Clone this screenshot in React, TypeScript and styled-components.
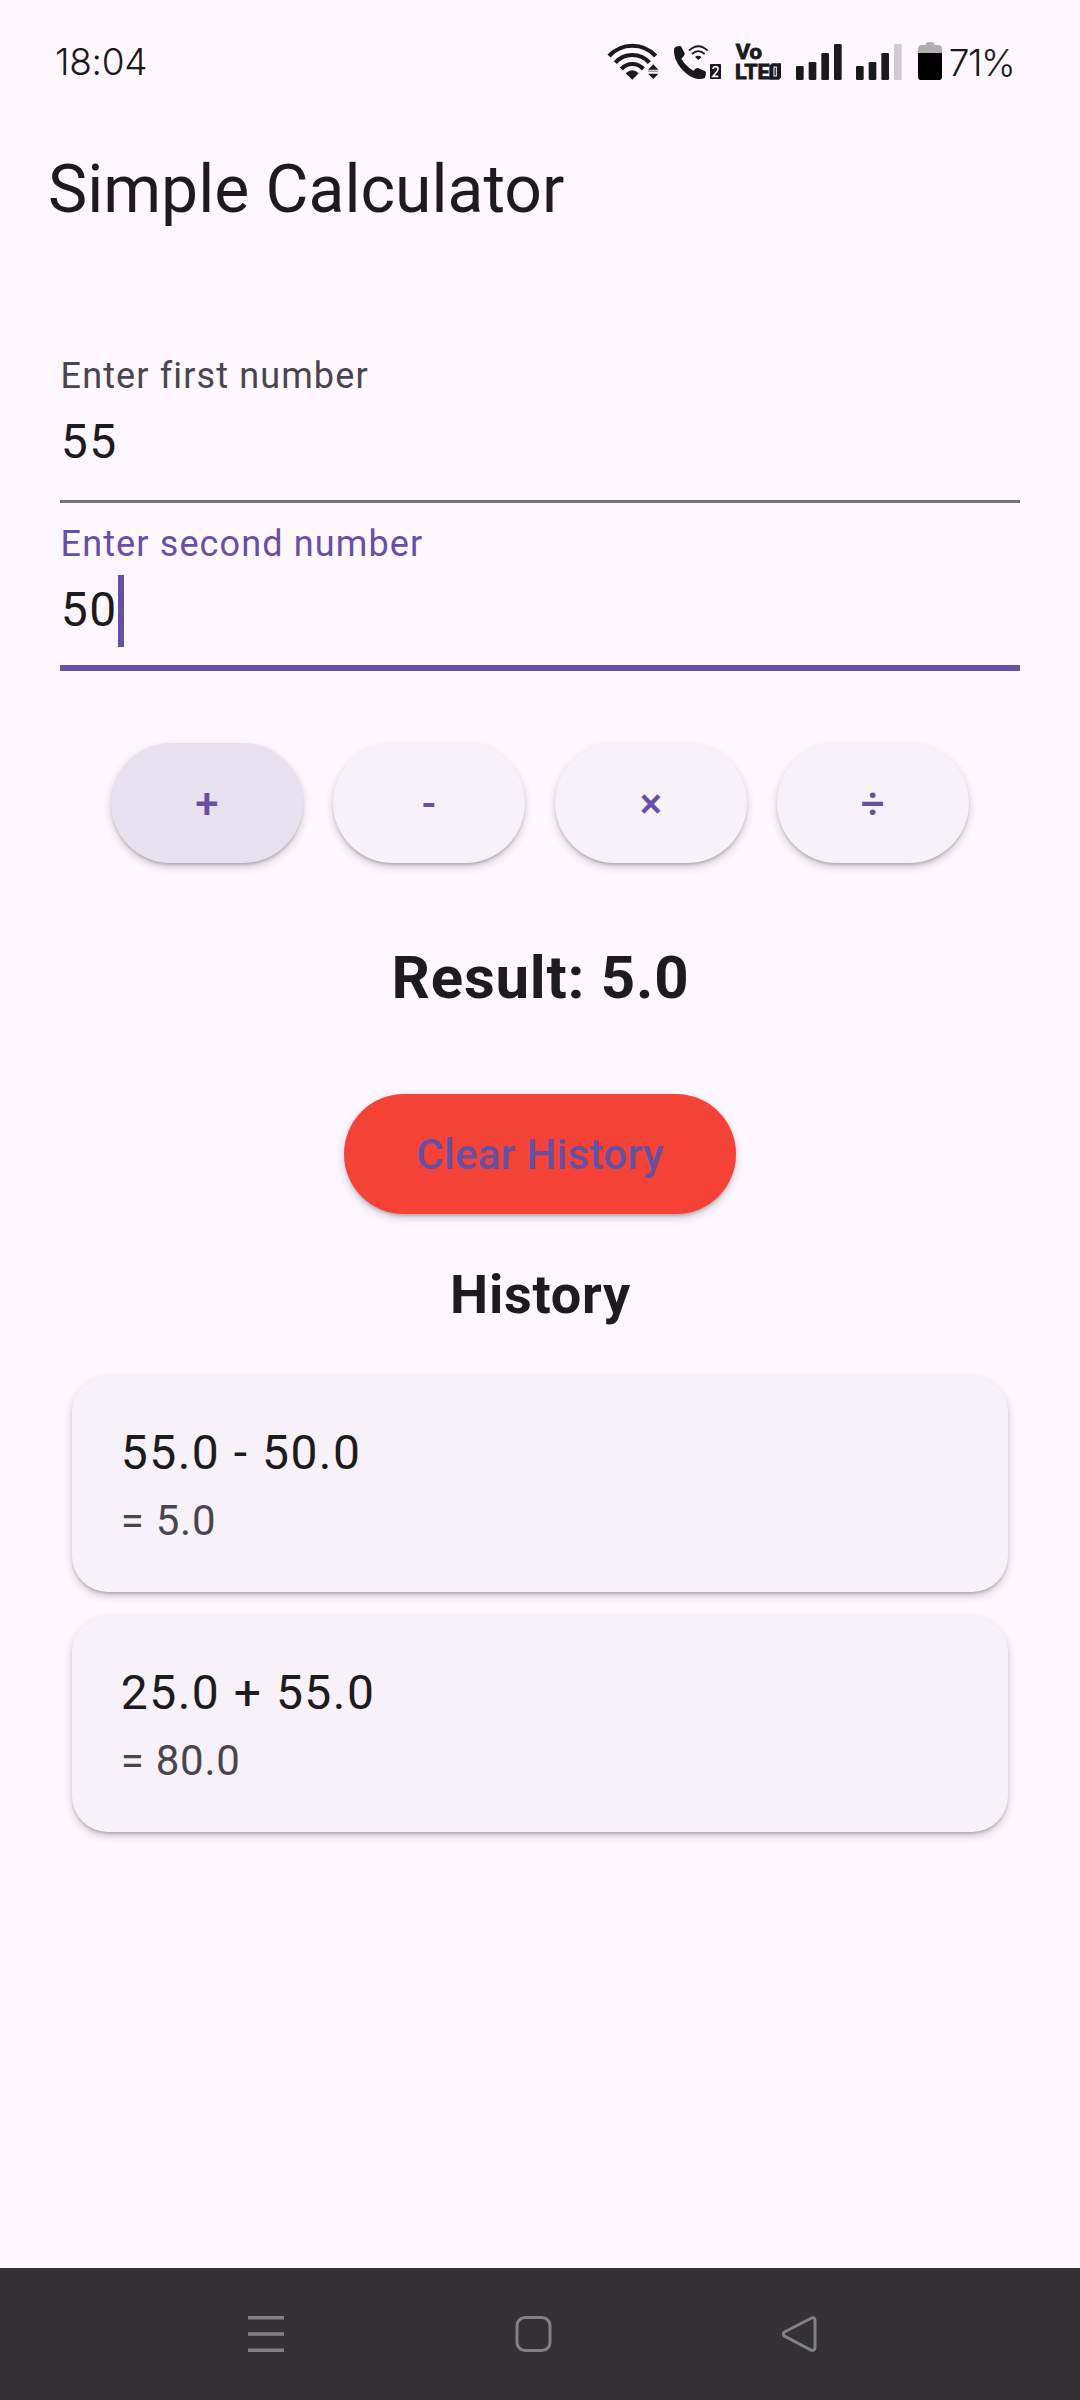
import React from "react";
import styled, { createGlobalStyle } from "styled-components";

const GlobalStyle = createGlobalStyle`
  *, *::before, *::after { box-sizing: border-box; }
  body { margin: 0; background: #fef7ff; }
`;

const Screen = styled.div`
  width: 1080px;
  height: 2400px;
  display: flex;
  flex-direction: column;
  background: #fef7ff;
  color: #1d1b20;
  font-family: Roboto, sans-serif;
  overflow: hidden;
`;

const StatusBar = styled.header`
  height: 120px;
  flex: none;
  padding: 30px 66px 0 55px;
  display: flex;
  justify-content: space-between;
  align-items: flex-start;
`;

const StatusText = styled.span<{ $spacing: number; $top: number }>`
  font-family: Inter, sans-serif;
  font-weight: 300;
  font-size: 37px;
  line-height: 44px;
  margin-top: ${(p) => p.$top}px;
  letter-spacing: ${(p) => p.$spacing}px;
  white-space: nowrap;
  color: #1a1a1a;
`;

const StatusIcons = styled.div`
  display: flex;
  align-items: flex-start;
`;

const Glyph = styled.svg<{ $gap?: number }>`
  display: block;
  flex: none;
  margin-right: ${(p) => p.$gap ?? 0}px;
`;

const AppBar = styled.div`
  height: 180px;
  flex: none;
  padding: 31px 48px 0;
`;

const Title = styled.h1`
  margin: 0;
  font-size: 66px;
  line-height: 78px;
  font-weight: 400;
`;

const Body = styled.main`
  flex: 1;
  display: flex;
  flex-direction: column;
  align-items: center;
  padding: 35px 60px 0;
`;

const Field = styled.label<{ $focused?: boolean }>`
  width: 100%;
  height: 168px;
  flex: none;
  padding: 20px 0 0;
  display: flex;
  flex-direction: column;
  color: ${(p) => (p.$focused ? "#6750a4" : "#49454f")};
`;

const FieldLabel = styled.span`
  padding-left: 0.6px;
  font-size: 36px;
  line-height: 42px;
  letter-spacing: 1.125px;
`;

const FieldValue = styled.span`
  height: 72px;
  margin-top: 9px;
  padding-left: 0.75px;
  display: flex;
  align-items: center;
  font-size: 48px;
  line-height: 72px;
  letter-spacing: 1.5px;
  color: #1d1b20;
`;

const Caret = styled.i`
  width: 6px;
  height: 72px;
  margin-top: 1px;
  background: #6750a4;
`;

const Underline = styled.span<{ $focused?: boolean }>`
  height: ${(p) => (p.$focused ? 6 : 3)}px;
  margin-top: ${(p) => (p.$focused ? 19 : 22)}px;
  background: ${(p) => (p.$focused ? "#6750a4" : "#79747e")};
`;

const elevation =
  "0 3px 3px -1px rgba(0,0,0,0.16), 0 4px 8px rgba(0,0,0,0.18), 0 1px 3px rgba(0,0,0,0.03)";

const Operators = styled.div`
  display: flex;
  gap: 30px;
  margin-top: 72px;
`;

const Button = styled.button<{ $tone?: "pressed" | "danger" }>`
  height: 120px;
  min-width: 192px;
  padding: 2px 72px 0;
  border: 0;
  border-radius: 60px;
  background: ${(p) =>
    p.$tone === "danger" ? "#f44336" : p.$tone === "pressed" ? "#e8e2f0" : "#f7f2fa"};
  box-shadow: ${elevation};
  color: #6750a4;
  font: 500 42px/60px Roboto, sans-serif;
  letter-spacing: 0.3px;
  white-space: nowrap;
`;

const Result = styled.p`
  margin: 73px 0 0;
  padding-left: 1px;
  font-size: 60px;
  line-height: 84px;
  font-weight: 700;
  letter-spacing: 0.75px;
`;

const ClearRow = styled.div`
  margin-top: 74px;
  display: flex;
`;

const HistoryTitle = styled.h2`
  margin: 43px 0 0;
  padding-left: 1px;
  font-size: 54px;
  line-height: 76px;
  font-weight: 700;
  letter-spacing: 0.75px;
`;

const HistoryList = styled.ul`
  list-style: none;
  width: 100%;
  margin: 42.5px 0 0;
  padding: 0 12px;
  display: flex;
  flex-direction: column;
  gap: 24px;
`;

const Card = styled.li`
  height: 216px;
  padding: 41px 48px 0 48.75px;
  border-radius: 36px;
  background: #f7f2fa;
  box-shadow: ${elevation};
  display: flex;
  flex-direction: column;
`;

const Expression = styled.span`
  font-size: 48px;
  line-height: 72px;
  letter-spacing: 1.5px;
`;

const Answer = styled.span`
  margin-top: 2px;
  font-size: 42px;
  line-height: 60px;
  letter-spacing: 0.75px;
  color: #49454f;
`;

const NavBar = styled.nav`
  height: 132px;
  flex: none;
  background: #333134;
  display: flex;
  align-items: center;
  justify-content: space-between;
  padding: 0 259px 0 245px;
`;

const INK = "#1a1a1a";

const WifiIcon = () => (
  <Glyph $gap={12} width={54} height={60} viewBox="54 0 162 180">
    <g fill="none" stroke={INK} strokeWidth="12.500">
      <path d="M60 78A95 95 0 0 1 200 78" />
      <path d="M79 98A68 68 0 0 1 181 98" />
      <path d="M97 117A44 44 0 0 1 163 117" />
    </g>
    <path d="M110 130Q130 112 149 130L130 149Z" fill={INK} />
    <path d="M177 119L193 103L208 119ZM177 131H208L193 147Z" fill={INK} />
    <path d="M177 123.500H208" stroke="#77737a" strokeWidth="3" />
  </Glyph>
);

const CallIcon = () => (
  <Glyph $gap={12} width={50} height={60} viewBox="252 0 150 180">
    <path
      d="M256 54Q265 46 276 49L287 70Q288 76 277 86Q289 107 313 122Q320 113 327 114L349 124Q353 130 348 143Q339 149 323 146C291 141 248 94 256 54Z"
      fill={INK}
    />
    <g fill="none" stroke={INK} strokeWidth="5.500">
      <path d="M300 62Q328 35 356 62" />
      <path d="M309 72Q328 55 347 72" />
    </g>
    <path d="M318 81Q328 73 338 81L328 90Z" fill={INK} />
    <rect x="363" y="102" width="33" height="45" rx="2" fill={INK} />
    <path d="M372 117Q373 110 380 110Q387 110 387 117Q387 122 372 139H388" fill="none" stroke="#fef7ff" strokeWidth="5" />
  </Glyph>
);

const VolteIcon = () => (
  <Glyph $gap={14} width={47} height={60} viewBox="438 0 141 180">
    <g fill={INK} stroke={INK} strokeWidth="2.500" fontFamily="Roboto, sans-serif" fontWeight="700">
      <text x="440" y="88" fontSize="61" textLength="79" lengthAdjust="spacingAndGlyphs">Vo</text>
      <text x="438" y="148" fontSize="63" textLength="104" lengthAdjust="spacingAndGlyphs">LTE</text>
    </g>
    <path d="M549 100H576V142L570 149H541V108Z" fill={INK} />
    <rect x="555" y="111" width="7" height="27" fill="none" stroke="#fef7ff" strokeWidth="3" />
  </Glyph>
);

const SignalIcon = ({ gap, weak }: { gap: number; weak?: boolean }) => (
  <Glyph $gap={gap} width={46} height={60} viewBox="0 0 138 180">
    {[108, 96, 69, 42].map((y, i) => (
      <rect
        key={y}
        x={i * 38}
        y={y}
        width="23"
        height={150 - y}
        rx="4"
        fill={weak && i === 3 ? "#cfc9d0" : INK}
      />
    ))}
  </Glyph>
);

const BatteryIcon = () => (
  <Glyph $gap={7} width={24} height={60} viewBox="354 0 72 180">
    <path d="M354 69V57Q354 45 366 45H376Q378 36 387 36H393Q402 36 404 45H414Q426 45 426 57V69Z" fill="#b2adb3" />
    <path d="M354 69H426V140Q426 150 416 150H364Q354 150 354 140Z" fill="#000" />
  </Glyph>
);

const history = [
  { expression: "55.0 - 50.0", answer: "= 5.0" },
  { expression: "25.0 + 55.0", answer: "= 80.0" },
];

export default function App() {
  return (
    <Screen>
      <GlobalStyle />
      <StatusBar>
        <StatusText $spacing={-0.3} $top={10}>18:04</StatusText>
        <StatusIcons>
          <WifiIcon />
          <CallIcon />
          <VolteIcon />
          <SignalIcon gap={14} />
          <SignalIcon gap={16} weak />
          <BatteryIcon />
          <StatusText $spacing={-1.6} $top={11}>71%</StatusText>
        </StatusIcons>
      </StatusBar>
      <AppBar>
        <Title>Simple Calculator</Title>
      </AppBar>
      <Body>
        <Field>
          <FieldLabel>Enter first number</FieldLabel>
          <FieldValue>55</FieldValue>
          <Underline />
        </Field>
        <Field $focused>
          <FieldLabel>Enter second number</FieldLabel>
          <FieldValue>
            50
            <Caret />
          </FieldValue>
          <Underline $focused />
        </Field>
        <Operators>
          <Button $tone="pressed">+</Button>
          <Button>-</Button>
          <Button>×</Button>
          <Button>÷</Button>
        </Operators>
        <Result>Result: 5.0</Result>
        <ClearRow>
          <Button $tone="danger">Clear History</Button>
        </ClearRow>
        <HistoryTitle>History</HistoryTitle>
        <HistoryList>
          {history.map((h) => (
            <Card key={h.expression}>
              <Expression>{h.expression}</Expression>
              <Answer>{h.answer}</Answer>
            </Card>
          ))}
        </HistoryList>
      </Body>
      <NavBar>
        <Glyph width={42} height={42} viewBox="0 0 42 42">
          <path d="M3 4.800H39M3 21H39M3 37.200H39" stroke="#818082" strokeWidth="3.400" />
        </Glyph>
        <Glyph width={42} height={42} viewBox="0 0 42 42">
          <rect x="5" y="4.500" width="33" height="33" rx="8" fill="none" stroke="#818082" strokeWidth="3" />
        </Glyph>
        <Glyph width={42} height={42} viewBox="0 0 42 42">
          <path
            d="M32.500 5L5.500 19Q3 21 5.500 23.200L32.500 37.300Q36 38 36 34.500V7.500Q36 4 32.500 5Z"
            fill="none"
            stroke="#818082"
            strokeWidth="3"
            strokeLinejoin="round"
          />
        </Glyph>
      </NavBar>
    </Screen>
  );
}
